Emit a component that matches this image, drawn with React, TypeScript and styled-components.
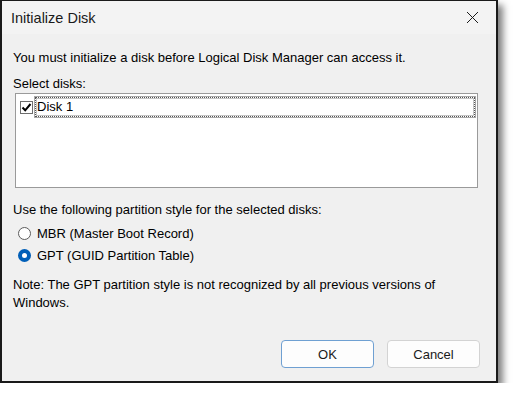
import { FC, useState } from 'react';
import styled, { createGlobalStyle } from 'styled-components';

const GlobalStyle = createGlobalStyle`
  html, body {
    margin: 0;
    padding: 0;
    background: #ffffff;
  }
  body {
    font-family: 'Liberation Sans', Arial, sans-serif;
    color: #000;
  }
`;

const Dialog = styled.div`
  width: 494px;
  height: 380px;
  border: 2px solid #1a1a1a;
  border-top-width: 1px;
  background: #f0f0f0;
  box-shadow: 5px 5px 7px rgba(0, 0, 0, 0.5);
  display: flex;
  flex-direction: column;
`;

const TitleBar = styled.div`
  height: 33px;
  display: flex;
  align-items: center;
  justify-content: space-between;
  padding: 0 16px 0 9px;
  background: #f3f3f3;
`;

const Title = styled.span`
  font-size: 14.5px;
  color: #1a1a1a;
`;

const CloseButton = styled.button`
  width: 16px;
  height: 16px;
  padding: 0;
  border: none;
  background: transparent;
  display: flex;
  align-items: center;
  justify-content: center;
  cursor: pointer;
`;

const Body = styled.div`
  flex: 1;
  display: flex;
  flex-direction: column;
  padding: 15px 16px 12px 11px;
  font-size: 13px;
`;

const Text = styled.div<{ $gap?: number }>`
  margin-top: ${(p) => p.$gap ?? 0}px;
  line-height: 18px;
`;

const ListBox = styled.div`
  margin: 0 2px 0 2px;
  height: 87px;
  border: 1px solid #9a9a9a;
  background: #ffffff;
  padding: 3px 2px;
`;

const ListRow = styled.label`
  display: flex;
  align-items: center;
  gap: 2px;
  cursor: pointer;
`;

const Check = styled.span`
  width: 11px;
  height: 11px;
  margin-left: 2px;
  border: 1px solid #6d6d6d;
  background: #fff;
  display: flex;
  align-items: center;
  justify-content: center;
  flex: none;
`;

const RowLabel = styled.span`
  flex: 1;
  height: 18px;
  line-height: 18px;
  padding-left: 1px;
  border: 1px dotted #555;
  outline: 1px solid #c4c4c4;
  outline-offset: -2px;
  box-shadow: 0 0 0 1px #a8a8a8;
`;

const RadioGroup = styled.div`
  margin-top: 3px;
  display: flex;
  flex-direction: column;
`;

const RadioRow = styled.label`
  display: flex;
  align-items: center;
  gap: 6px;
  height: 22px;
  padding-left: 5px;
  cursor: pointer;
`;

const RadioDot = styled.span<{ $on: boolean }>`
  width: 13px;
  height: 13px;
  box-sizing: border-box;
  border-radius: 50%;
  border: ${(p) => (p.$on ? '4px solid #005fb8' : '1px solid #5c5c5c')};
  background: #ffffff;
  flex: none;
`;

const Buttons = styled.div`
  margin-top: auto;
  display: flex;
  justify-content: flex-end;
  gap: 13px;
  padding-bottom: 1px;
`;

const Button = styled.button<{ $primary?: boolean }>`
  width: 93px;
  height: 28px;
  font-family: 'Liberation Sans', Arial, sans-serif;
  font-size: 13px;
  color: #1a1a1a;
  background: #fdfdfd;
  border: 1px solid ${(p) => (p.$primary ? '#6fa0d2' : '#d3d3d3')};
  border-radius: 4px;
  cursor: pointer;
`;

const App: FC = () => {
  const [style, setStyle] = useState<'mbr' | 'gpt'>('gpt');
  const [checked, setChecked] = useState(true);

  return (
    <>
      <GlobalStyle />
      <Dialog>
        <TitleBar>
          <Title>Initialize Disk</Title>
          <CloseButton aria-label="Close">
            <svg width="13" height="13" viewBox="0 0 13 13">
              <path d="M1 1 L12 12 M12 1 L1 12" stroke="#1a1a1a" strokeWidth="1" />
            </svg>
          </CloseButton>
        </TitleBar>
        <Body>
          <Text>You must initialize a disk before Logical Disk Manager can access it.</Text>
          <Text $gap={8}>Select disks:</Text>
          <ListBox>
            <ListRow onClick={() => setChecked(!checked)}>
              <Check>
                {checked && (
                  <svg width="11" height="11" viewBox="0 0 11 11">
                    <path d="M1.5 5.5 L4.2 8.3 L9.5 2" fill="none" stroke="#000" strokeWidth="2" />
                  </svg>
                )}
              </Check>
              <RowLabel>Disk 1</RowLabel>
            </ListRow>
          </ListBox>
          <Text $gap={13}>Use the following partition style for the selected disks:</Text>
          <RadioGroup>
            <RadioRow onClick={() => setStyle('mbr')}>
              <RadioDot $on={style === 'mbr'} />
              MBR (Master Boot Record)
            </RadioRow>
            <RadioRow onClick={() => setStyle('gpt')}>
              <RadioDot $on={style === 'gpt'} />
              GPT (GUID Partition Table)
            </RadioRow>
          </RadioGroup>
          <Text $gap={10}>
            Note: The GPT partition style is not recognized by all previous versions of
            <br />
            Windows.
          </Text>
          <Buttons>
            <Button $primary>OK</Button>
            <Button>Cancel</Button>
          </Buttons>
        </Body>
      </Dialog>
    </>
  );
};

export default App;
